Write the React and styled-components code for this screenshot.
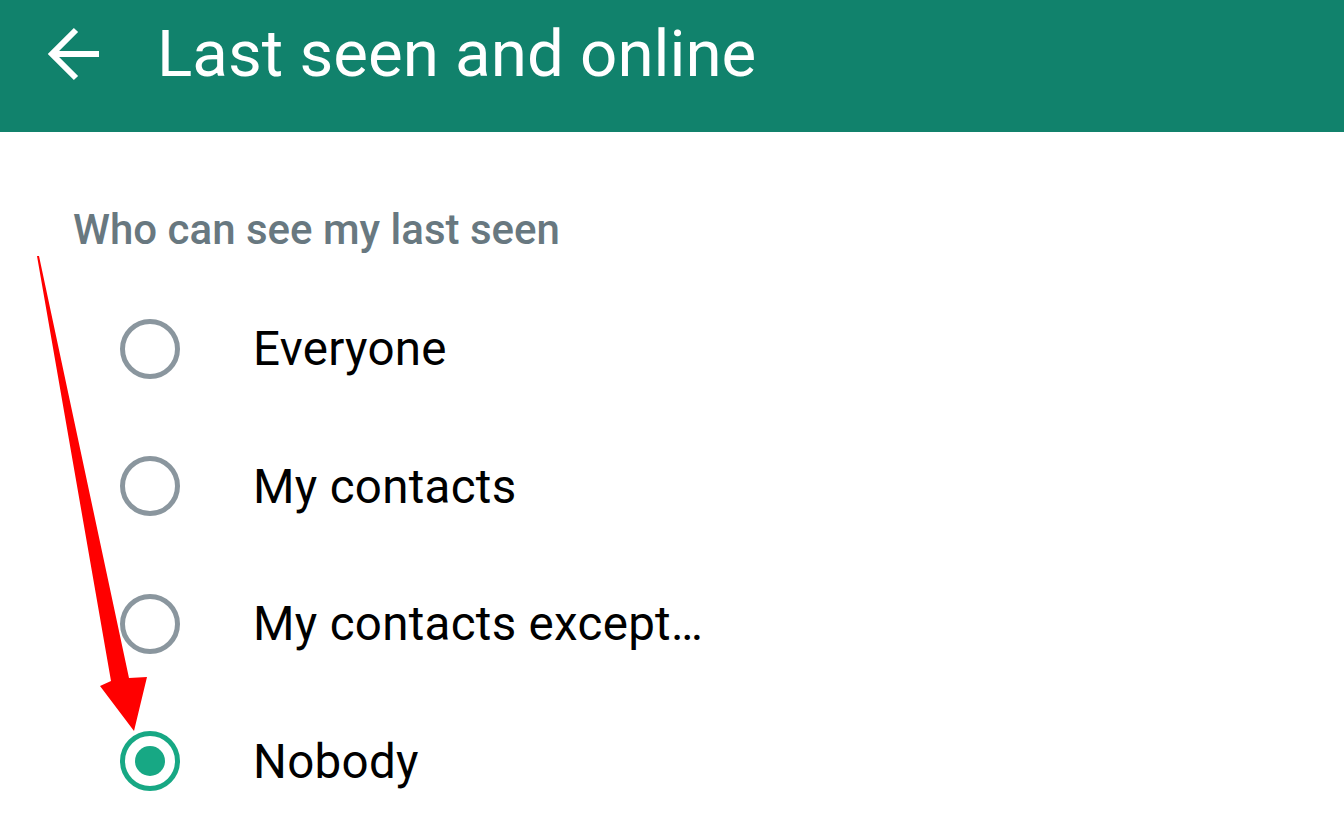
import React from "react";
import styled, { createGlobalStyle } from "styled-components";

const Global = createGlobalStyle`
  html, body { margin: 0; padding: 0; background: #ffffff; }
  body { font-family: Roboto, "Noto Sans", sans-serif; }
  * { box-sizing: border-box; }
`;

const Page = styled.div`
  position: relative;
  width: 1344px;
  height: 818px;
  overflow: hidden;
  background: #ffffff;
`;

const Toolbar = styled.header`
  height: 132px;
  background: #11826c;
  display: flex;
  align-items: center;
  padding-left: 46px;
  padding-bottom: 24px;
`;

const BackButton = styled.button`
  width: 54px;
  height: 54px;
  padding: 0;
  border: 0;
  background: transparent;
  display: flex;
  align-items: center;
  justify-content: center;
  margin-right: 57px;
`;

const Title = styled.h1`
  margin: 0;
  color: #ffffff;
  font-family: Roboto, sans-serif;
  font-weight: 400;
  font-size: 65.5px;
  letter-spacing: 0;
  line-height: 1;
`;

const Section = styled.section`
  padding-left: 73px;
`;

const SectionTitle = styled.h2`
  margin: 0;
  height: 148px;
  padding-top: 75px;
  color: #687880;
  font-family: Roboto, sans-serif;
  font-weight: 500;
  font-size: 42px;
  line-height: 46px;
`;

const Options = styled.div`
  display: flex;
  flex-direction: column;
`;

const Option = styled.label`
  height: 137.5px;
  display: flex;
  align-items: center;
  padding-left: 47px;
`;

const Radio = styled.span`
  width: 60px;
  height: 60px;
  border-radius: 50%;
  border: 5px solid ${(p) => (p.$checked ? "#17a884" : "#8a969e")};
  display: flex;
  align-items: center;
  justify-content: center;
  margin-right: 73px;
  flex-shrink: 0;
  &::after {
    content: "";
    display: ${(p) => (p.$checked ? "block" : "none")};
    width: 30px;
    height: 30px;
    border-radius: 50%;
    background: #17a884;
  }
`;

const OptionText = styled.span`
  color: #000000;
  font-family: Roboto, sans-serif;
  font-size: 47.5px;
  font-weight: 400;
  letter-spacing: 0.3px;
  line-height: 1;
  margin-top: 2px;
`;

const Annotation = styled.svg`
  position: absolute;
  left: 0;
  top: 0;
  width: 1344px;
  height: 818px;
  pointer-events: none;
`;

const options = ["Everyone", "My contacts", "My contacts except\u2026", "Nobody"];

export default function App() {
  return (
    <Page>
      <Global />
      <Toolbar>
        <BackButton aria-label="Back">
          <svg width="54" height="54" viewBox="0 0 54 54">
            <polyline
              points="30,3 6,27 30,51"
              fill="none"
              stroke="#ffffff"
              strokeWidth="6"
              strokeLinejoin="miter"
            />
            <line x1="7" y1="27" x2="53" y2="27" stroke="#ffffff" strokeWidth="6" />
          </svg>
        </BackButton>
        <Title>Last seen and online</Title>
      </Toolbar>
      <Section>
        <SectionTitle>Who can see my last seen</SectionTitle>
        <Options>
          {options.map((o, i) => (
            <Option key={o}>
              <Radio $checked={i === 3} />
              <OptionText>{o}</OptionText>
            </Option>
          ))}
        </Options>
      </Section>
      <Annotation viewBox="0 0 1344 818">
        <polygon
          points="37,256 111,681 100,686 134,731 147,677 129,678 39,256"
          fill="#ff0000"
        />
      </Annotation>
    </Page>
  );
}
